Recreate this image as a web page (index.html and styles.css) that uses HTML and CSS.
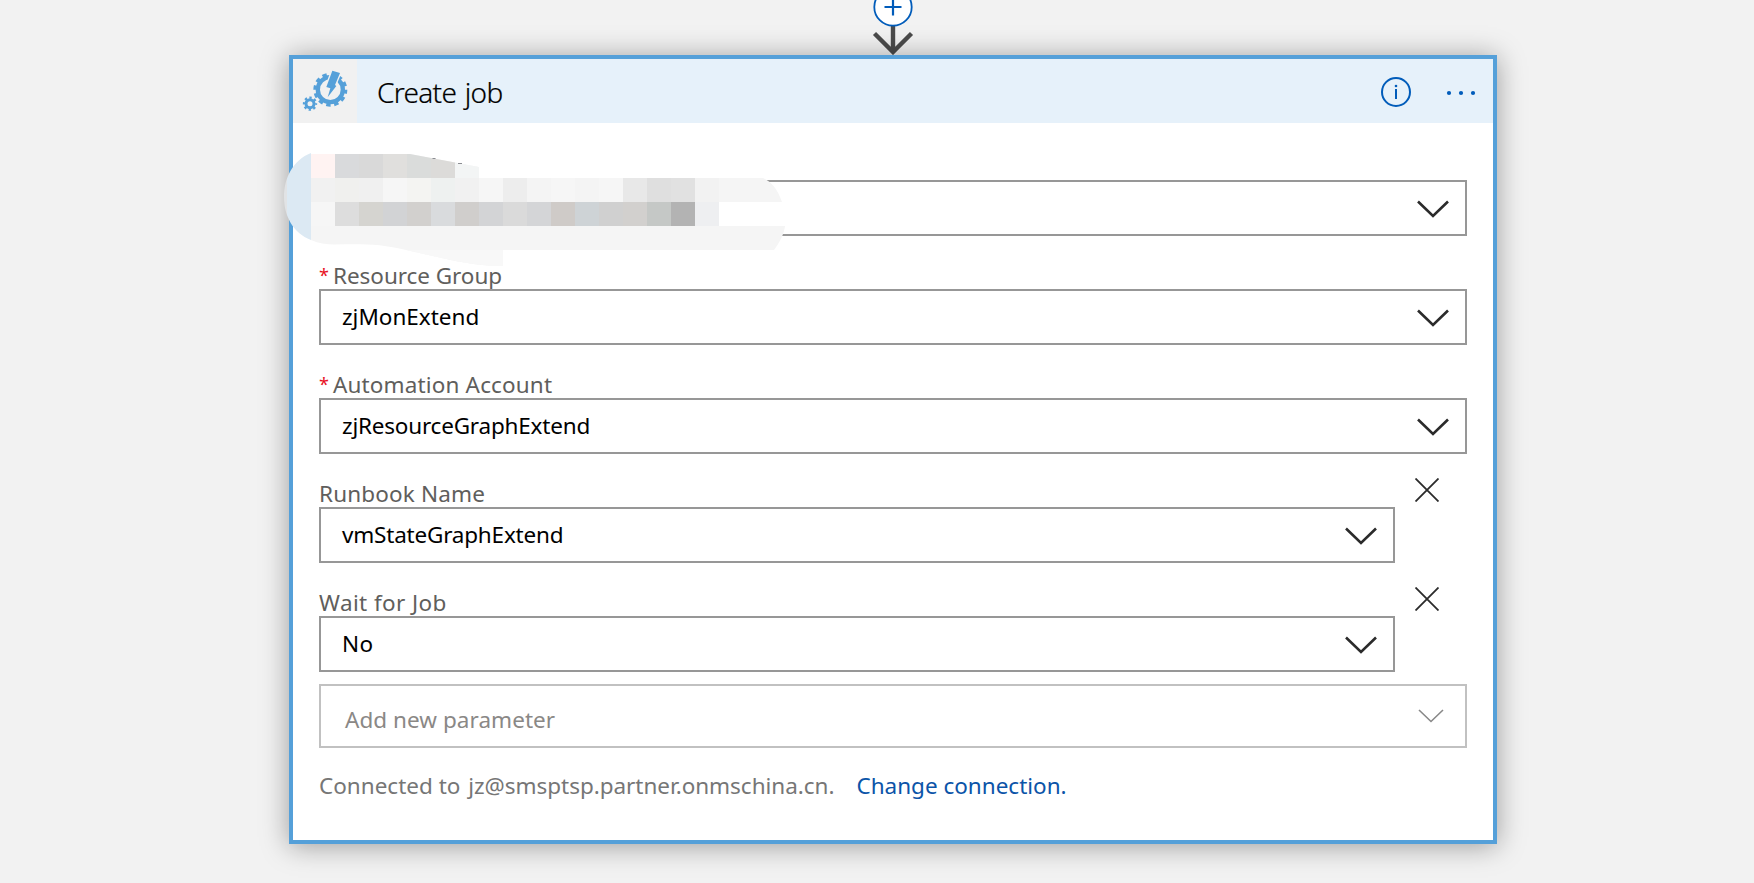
FILE: index.html
```
<!DOCTYPE html>
<html lang="en">
<head>
<meta charset="utf-8">
<title>Create job</title>
<link rel="stylesheet" href="styles.css">
</head>
<body>
<svg class="connector" viewBox="0 0 60 55" aria-hidden="true">
  <path d="M30 25V51M11.5 33.5L30 52L48.5 33.5" fill="none" stroke="#4b4b4b" stroke-width="4.4"/>
  <circle cx="30" cy="7" r="18.7" fill="#fff" stroke="#015cba" stroke-width="1.8"/>
  <path d="M21.5 7H38.5M30 -1.5V15.5" stroke="#015cba" stroke-width="2.2"/>
</svg>
<main class="card">
  <header class="card-header">
    <svg class="card-icon" viewBox="39 42 192 192" aria-hidden="true">
      <g fill="none" stroke="#55a0d9">
        <circle cx="151" cy="134" r="37.5" stroke-width="13"/>
        <circle cx="151" cy="134" r="45.5" stroke-width="11" pathLength="24" stroke-dasharray="1.1 .9" stroke-dashoffset=".1"/>
        <circle cx="90" cy="176" r="12" stroke-width="9"/>
        <circle cx="90" cy="176" r="18" stroke-width="7" pathLength="16" stroke-dasharray="1 1" stroke-dashoffset=".5"/>
      </g>
      <path d="M157 77L180 84L165 120L169 123L143 157L151 130L139 126Z" fill="#55a0d9" stroke="#f1f1f1" stroke-width="8" paint-order="stroke"/>
    </svg>
    <h1 class="card-title">Create job</h1>
    <svg class="header-info" viewBox="0 0 32 32" aria-hidden="true">
      <circle cx="16" cy="16" r="14" fill="none" stroke="#015cba" stroke-width="2"/>
      <path d="M16 13V23" stroke="#015cba" stroke-width="2"/>
      <circle cx="16" cy="10" r="1.3" fill="#015cba"/>
    </svg>
    <svg class="header-more" viewBox="0 0 32 8" fill="#015cba" aria-hidden="true">
      <circle cx="4" cy="4" r="2.1"/><circle cx="16" cy="4" r="2.1"/><circle cx="28" cy="4" r="2.1"/>
    </svg>
  </header>
  <section class="fields">
    <div class="field">
      <div class="field-label"></div>
      <div class="select"><svg class="chevron" viewBox="0 0 32 18"><path d="M1 1.5L16 16L31 1.5"/></svg></div>
    </div>
    <div class="field">
      <div class="field-label"><span class="required">*</span><span class="tight">Resource Group</span></div>
      <div class="select"><span>zjMonExtend</span><svg class="chevron" viewBox="0 0 32 18"><path d="M1 1.5L16 16L31 1.5"/></svg></div>
    </div>
    <div class="field">
      <div class="field-label"><span class="required">*</span><span class="loose">Automation Account</span></div>
      <div class="select"><span class="tighter">zjResourceGraphExtend</span><svg class="chevron" viewBox="0 0 32 18"><path d="M1 1.5L16 16L31 1.5"/></svg></div>
    </div>
    <div class="field removable">
      <div class="field-main">
        <div class="field-label"><span class="loose">Runbook Name</span></div>
        <div class="select"><span class="tighter">vmStateGraphExtend</span><svg class="chevron" viewBox="0 0 32 18"><path d="M1 1.5L16 16L31 1.5"/></svg></div>
      </div>
      <svg class="remove" viewBox="0 0 24 24"><path d="M.5 .5L23.5 23.5M23.5 .5L.5 23.5"/></svg>
    </div>
    <div class="field removable">
      <div class="field-main">
        <div class="field-label"><span class="looser">Wait for Job</span></div>
        <div class="select"><span class="looser">No</span><svg class="chevron" viewBox="0 0 32 18"><path d="M1 1.5L16 16L31 1.5"/></svg></div>
      </div>
      <svg class="remove" viewBox="0 0 24 24"><path d="M.5 .5L23.5 23.5M23.5 .5L.5 23.5"/></svg>
    </div>
    <div class="add"><span>Add new parameter</span><svg class="add-chevron" viewBox="0 0 26 14"><path d="M1 1L13 12.5L25 1"/></svg></div>
    <div class="connection"><span>Connected to <span class="account">jz@smsptsp.partner.onmschina.cn.</span></span><a>Change connection.</a></div>
  </section>
  <svg class="redaction" viewBox="280 150 510 120" aria-hidden="true">
    <defs>
      <clipPath id="smear">
        <path d="M311 153C293 160 284 178 284 197C284 216 293 233 311 240C319 243.5 326 244.5 334 244.5C356 244 380 243 406 250L455 261C472 264 486 266 503 266V250H774C780 242 784 234 785 226V202H782C778 190 772 182 763 178H479V167L410 154H311Z"/>
      </clipPath>
    </defs>
    <g clip-path="url(#smear)" shape-rendering="crispEdges">
      <rect x="280" y="150" width="7" height="120" fill="#e1e3e5"/>
      <rect x="287" y="150" width="24" height="120" fill="#dce9f3"/>
      <rect x="311" y="150" width="480" height="120" fill="#f5f5f5"/>
      <g id="tiles"></g>
      <rect x="719" y="202" width="70" height="24" fill="#fff"/>
      <rect x="407" y="250" width="96" height="20" fill="#f8f8f8"/>
    </g>
    <path d="M432.5 158.5h3M458 163.5h4" stroke="#8b8d92" stroke-width="1"/>
  </svg>
</main>
<script src="tiles.js"></script>
</body>
</html>
```
FILE: tiles.js
```
// Pixelated tiles, 24px square, drawn row by row from x = 311.
const rows = [
  [154, "fff3f2 d9dadc d9d9d9 e0dfdd dadcdb dcdbd9 f3f5f5"],
  [178, "f1f1f1 f0f0ee f0f0f0 f6f6f6 f4f4f2 eef1f0 f1f1f1 f6f6f6 ededed f4f4f4 f6f6f6 f4f4f4 f6f6f6 e8e8e8 dfdfdf e1e1e1 f2f2f2"],
  [202, "f6f6f6 dddddd d5d4d0 d2d3d5 d2d0ce d9dbdd d0cecc d3d4d6 dadada d4d5d7 cfcbc8 ced3d6 d0d0d0 d2d0ce c5c8c6 b3b3b3 eeeff1"]
];
const tiles = document.getElementById("tiles");
for (const [y, colors] of rows) {
  colors.split(" ").forEach((color, i) => {
    const r = document.createElementNS("http://www.w3.org/2000/svg", "rect");
    const attrs = { x: 311 + i * 24, y, width: 24, height: 24, fill: "#" + color };
    for (const k in attrs) r.setAttribute(k, attrs[k]);
    tiles.appendChild(r);
  });
}
```
FILE: styles.css
```
* { box-sizing: border-box; }
body { margin: 0; height: 883px; overflow: hidden; background: #f2f2f2; font-family: "Noto Sans", "Open Sans", sans-serif; font-size: 22.5px; color: #000; }
.connector { display: block; width: 60px; height: 55px; margin-left: 863px; }
.card { position: relative; width: 1208px; height: 789px; margin-left: 289px; border: 4px solid #55a0d9; background: #fff; box-shadow: 0 2px 26px rgba(0,0,0,.36); }
.card-header { display: flex; align-items: center; height: 64px; background: #e6f1fa; padding-right: 16px; }
.card-icon { width: 64px; height: 64px; background: #f1f1f1; }
.card-title { flex: 1; margin: 0 0 0 20px; padding-top: 2px; font-size: 28px; font-weight: 300; line-height: 64px; letter-spacing: -.7px; word-spacing: 2px; -webkit-text-stroke: .2px #000; }
.header-info { width: 32px; height: 32px; margin: 2px 33px 0 0; }
.header-more { width: 32px; height: 8px; margin-top: 4px; }
.fields { padding: 30px 26px 0; }
.field { height: 109px; }
.field-label { display: flex; height: 27px; line-height: 27px; color: #605e5c; }
.required { width: 14px; color: #e81123; font-size: 18px; line-height: 26px; }
.select { display: flex; align-items: center; height: 56px; border: 2px solid #979797; padding: 0 16px 0 21px; }
.select span { padding-bottom: 2px; }
.chevron { width: 32px; height: 18px; margin: 2px 0 0 auto; fill: none; stroke: #2b2b2b; stroke-width: 2.6; }
.tight { letter-spacing: -.05px; }
.tighter { letter-spacing: -.2px; }
.loose { letter-spacing: .15px; }
.looser { letter-spacing: .4px; }
.removable { display: flex; }
.field-main { width: 1076px; }
.remove { width: 24px; height: 24px; margin: -2px 0 0 20px; fill: none; stroke: #2b2b2b; stroke-width: 1.8; }
.add { display: flex; align-items: center; justify-content: space-between; height: 64px; margin-top: -14px; border: 2px solid #c1c1c1; padding: 0 21px 0 24px; color: #8a8886; }
.add span { padding-top: 6px; letter-spacing: .05px; }
.add-chevron { width: 26px; height: 14px; fill: none; stroke: #888; stroke-width: 1.6; }
.connection { display: flex; gap: 22px; margin-top: 22px; color: #767676; }
.connection a { color: #0b54a8; }
.account { margin-left: 2px; letter-spacing: -.03px; }
.redaction { position: absolute; left: -13px; top: 91px; width: 510px; height: 120px; }
```
